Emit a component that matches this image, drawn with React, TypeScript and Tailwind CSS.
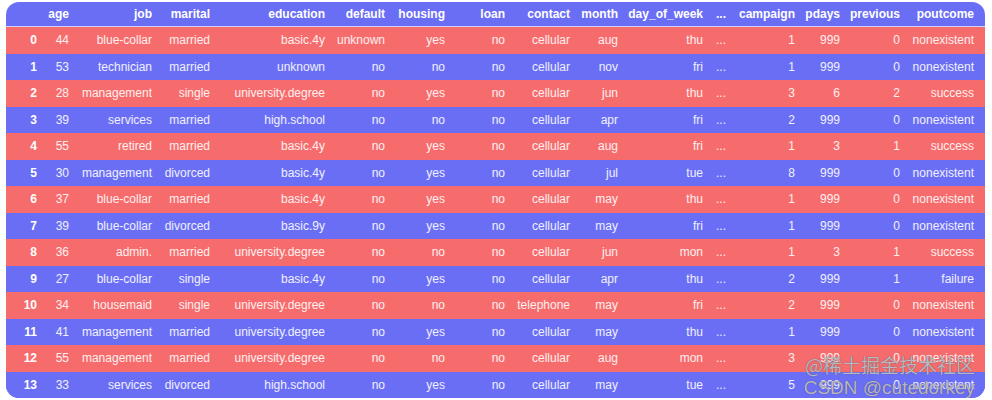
const columns = [
  '',
  'age',
  'job',
  'marital',
  'education',
  'default',
  'housing',
  'loan',
  'contact',
  'month',
  'day_of_week',
  '...',
  'campaign',
  'pdays',
  'previous',
  'poutcome',
];

const rows: string[][] = [
  ['0', '44', 'blue-collar', 'married', 'basic.4y', 'unknown', 'yes', 'no', 'cellular', 'aug', 'thu', '...', '1', '999', '0', 'nonexistent'],
  ['1', '53', 'technician', 'married', 'unknown', 'no', 'no', 'no', 'cellular', 'nov', 'fri', '...', '1', '999', '0', 'nonexistent'],
  ['2', '28', 'management', 'single', 'university.degree', 'no', 'yes', 'no', 'cellular', 'jun', 'thu', '...', '3', '6', '2', 'success'],
  ['3', '39', 'services', 'married', 'high.school', 'no', 'no', 'no', 'cellular', 'apr', 'fri', '...', '2', '999', '0', 'nonexistent'],
  ['4', '55', 'retired', 'married', 'basic.4y', 'no', 'yes', 'no', 'cellular', 'aug', 'fri', '...', '1', '3', '1', 'success'],
  ['5', '30', 'management', 'divorced', 'basic.4y', 'no', 'yes', 'no', 'cellular', 'jul', 'tue', '...', '8', '999', '0', 'nonexistent'],
  ['6', '37', 'blue-collar', 'married', 'basic.4y', 'no', 'yes', 'no', 'cellular', 'may', 'thu', '...', '1', '999', '0', 'nonexistent'],
  ['7', '39', 'blue-collar', 'divorced', 'basic.9y', 'no', 'yes', 'no', 'cellular', 'may', 'fri', '...', '1', '999', '0', 'nonexistent'],
  ['8', '36', 'admin.', 'married', 'university.degree', 'no', 'no', 'no', 'cellular', 'jun', 'mon', '...', '1', '3', '1', 'success'],
  ['9', '27', 'blue-collar', 'single', 'basic.4y', 'no', 'yes', 'no', 'cellular', 'apr', 'thu', '...', '2', '999', '1', 'failure'],
  ['10', '34', 'housemaid', 'single', 'university.degree', 'no', 'no', 'no', 'telephone', 'may', 'fri', '...', '2', '999', '0', 'nonexistent'],
  ['11', '41', 'management', 'married', 'university.degree', 'no', 'yes', 'no', 'cellular', 'may', 'thu', '...', '1', '999', '0', 'nonexistent'],
  ['12', '55', 'management', 'married', 'university.degree', 'no', 'no', 'no', 'cellular', 'aug', 'mon', '...', '3', '999', '0', 'nonexistent'],
  ['13', '33', 'services', 'divorced', 'high.school', 'no', 'yes', 'no', 'cellular', 'may', 'tue', '...', '5', '999', '0', 'nonexistent'],
];

// column widths follow the right edges of the screenshot
const grid =
  'grid grid-cols-[31px_32px_83px_58px_115px_60px_60px_60px_65px_48px_85px_23px_69px_45px_60px_74px_1fr]';

export default function App() {
  return (
    <div className="w-[992px] h-[400px] bg-white pt-[2px] font-['Liberation_Sans',Arial,sans-serif] text-[12px] leading-none">
      <div className="relative ml-[6px] w-[979px] rounded-[13px] overflow-hidden bg-[#6a6ef5] text-white">
        {/* header */}
        <div className={`${grid} h-[25px] items-center border-b border-white/70 font-bold`}>
          {columns.map((c, i) => (
            <div key={i} className="text-right">
              {c}
            </div>
          ))}
          <div />
        </div>

        {rows.map((r, ri) => (
          <div
            key={ri}
            className={`${grid} h-[26.5px] items-center ${ri % 2 === 0 ? 'bg-[#f66b6c]' : 'bg-[#6a6ef5]'}`}
          >
            {r.map((v, ci) => (
              <div
                key={ci}
                className={ci === 0 ? 'text-right font-bold' : 'text-right text-white/90'}
              >
                {v}
              </div>
            ))}
            <div />
          </div>
        ))}

        {/* watermark */}
        <div className="absolute right-[10px] bottom-[1px] flex flex-col items-end gap-[4px] text-[19px] text-[#dcdce8]/75 [text-shadow:0_0_1px_#444] pointer-events-none">
          <span className="font-['Noto_Sans_CJK_SC',sans-serif] leading-none">@稀土掘金技术社区</span>
          <span className="leading-none">CSDN @cutedorkey</span>
        </div>
      </div>
    </div>
  );
}
